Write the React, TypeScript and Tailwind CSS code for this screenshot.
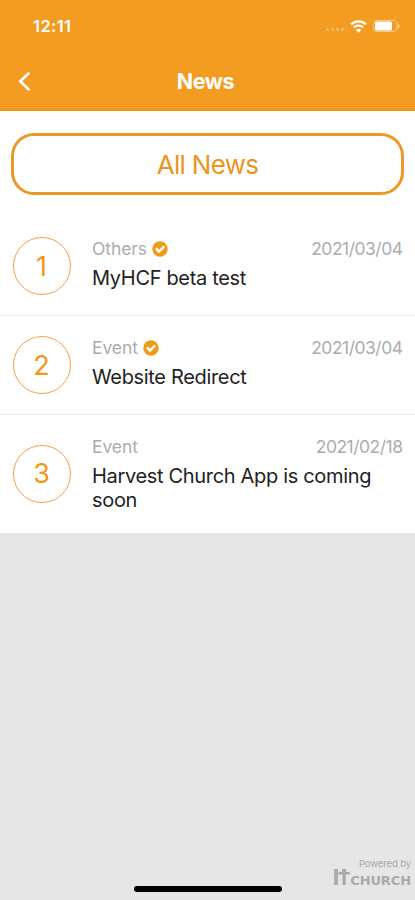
interface NewsItem {
  id: number;
  category: string;
  date: string;
  title: string;
  isNew?: boolean;
}

const news: NewsItem[] = [
  { id: 1, category: "Others", date: "2021/03/04", title: "MyHCF beta test", isNew: true },
  { id: 2, category: "Event", date: "2021/03/04", title: "Website Redirect", isNew: true },
  { id: 3, category: "Event", date: "2021/02/18", title: "Harvest Church App is coming soon" },
];

function WifiIcon() {
  return (
    <svg width="17" height="13" viewBox="0 0 17 13" fill="none" stroke="white" strokeWidth="2.3">
      <path d="M1 4.4C5.3.3 11.7.3 16 4.4" />
      <path d="M3.8 7.4c2.8-2.5 6.6-2.5 9.4 0" />
      <path d="M8.5 12.7 5.8 9.9c1.6-1.4 3.8-1.4 5.4 0z" fill="white" stroke="none" />
    </svg>
  );
}

function BatteryIcon() {
  return (
    <svg width="27" height="12" viewBox="0 0 27 12" fill="none">
      <rect x=".5" y=".5" width="23.5" height="11" rx="3" stroke="white" strokeOpacity=".45" />
      <rect x="2" y="1.5" width="17" height="9" rx="1.5" fill="white" />
      <path d="M25 3.5v5c2-.6 2-4.4 0-5z" fill="white" fillOpacity=".55" />
    </svg>
  );
}

function CheckBadge() {
  return (
    <svg width="16" height="16" viewBox="0 0 16 16" fill="none">
      <circle cx="8" cy="8" r="7.7" fill="#f09a1a" />
      <path d="m3.9 7.4 3.1 3.1 5.2-5.2" stroke="white" strokeWidth="2.4" />
    </svg>
  );
}

function StatusBar() {
  return (
    <div className="flex h-[52px] items-center justify-between pl-[33px] pr-[15px] text-white">
      <span className="text-[16.5px] font-semibold tracking-[0.4px]">12:11</span>
      <div className="flex items-center">
        <div className="mr-[6px] mt-[7px] flex gap-[2px]">
          {[0, 1, 2, 3].map((dot) => (
            <span key={dot} className="size-[3px] rounded-full bg-white/35" />
          ))}
        </div>
        <WifiIcon />
        <span className="w-[6px]" />
        <BatteryIcon />
      </div>
    </div>
  );
}

function NewsRow({ item }: { item: NewsItem }) {
  return (
    <li className="flex items-center border-b border-[#e9e9e9] px-[12.5px] py-5 last:border-b-0">
      <div className="grid size-[58px] shrink-0 place-items-center rounded-full border border-[#f3a14a] pt-[2px] text-[27px] font-[370] text-[#ef981d]">
        {item.id}
      </div>
      <div className="-mt-px ml-[21.5px] flex-1 self-start">
        <div className="flex h-[26px] items-center justify-between text-[17.5px] font-[380] text-[#acacac]">
          <span className="flex items-center gap-[5px] tracking-[-0.1px]">
            {item.category}
            {item.isNew && <CheckBadge />}
          </span>
          <span className="tracking-[-0.5px]">{item.date}</span>
        </div>
        <p className="mt-[4px] text-[20px] leading-[24px] tracking-[-0.33px] text-[#222]">{item.title}</p>
      </div>
    </li>
  );
}

export default function App() {
  return (
    <div className="relative flex h-[900px] w-full flex-col bg-[#e6e6e6] font-['Inter',sans-serif]">
      <header className="h-[111px] shrink-0 border-b border-[#e8901b] bg-[#f39c21]">
        <StatusBar />
        <div className="grid h-[58px] grid-cols-[1fr_auto_1fr] items-center text-white">
          <button className="ml-[7px] w-fit" aria-label="Back">
            <svg width="34" height="30" viewBox="0 0 34 30" fill="none" stroke="white" strokeWidth="2.7">
              <path d="M22.3 6.8 13.3 15.3l9 8.8" />
            </svg>
          </button>
          <h1 className="-ml-[4px] text-[21.5px] font-bold tracking-[-0.45px]">News</h1>
        </div>
      </header>

      <main className="bg-white pb-px pt-[22px]">
        <div className="px-[11px]">
          <button className="h-[62px] w-full rounded-[23px] border-3 border-[#ec9827] text-[26px] font-[370] tracking-[-0.7px] text-[#ec941c]">
            All News
          </button>
        </div>
        <ul className="mt-[22px]">
          {news.map((item) => (
            <NewsRow key={item.id} item={item} />
          ))}
        </ul>
      </main>

      <footer className="mt-auto flex h-[42px] flex-col items-end pr-[4px] text-[#aaa]">
        <span className="text-[9.5px] leading-[11px] tracking-[-0.1px]">Powered by</span>
        <div className="-mt-px flex items-baseline font-extrabold leading-[19px]">
          <span className="text-[21px] leading-[19px]">I</span>
          <span className="relative -ml-px mr-px text-[18px] leading-[19px] tracking-[-1px]">
            T
            <span className="absolute left-[4px] top-0 h-[5px] w-[4px] bg-[#aaa]" />
          </span>
          <span className="font-['DejaVu_Sans',sans-serif] text-[13px] font-bold tracking-[-0.1px]">CHURCH</span>
        </div>
      </footer>
      <div className="absolute bottom-[8px] left-[134px] h-[6px] w-[148px] rounded-full bg-black" />
    </div>
  );
}
